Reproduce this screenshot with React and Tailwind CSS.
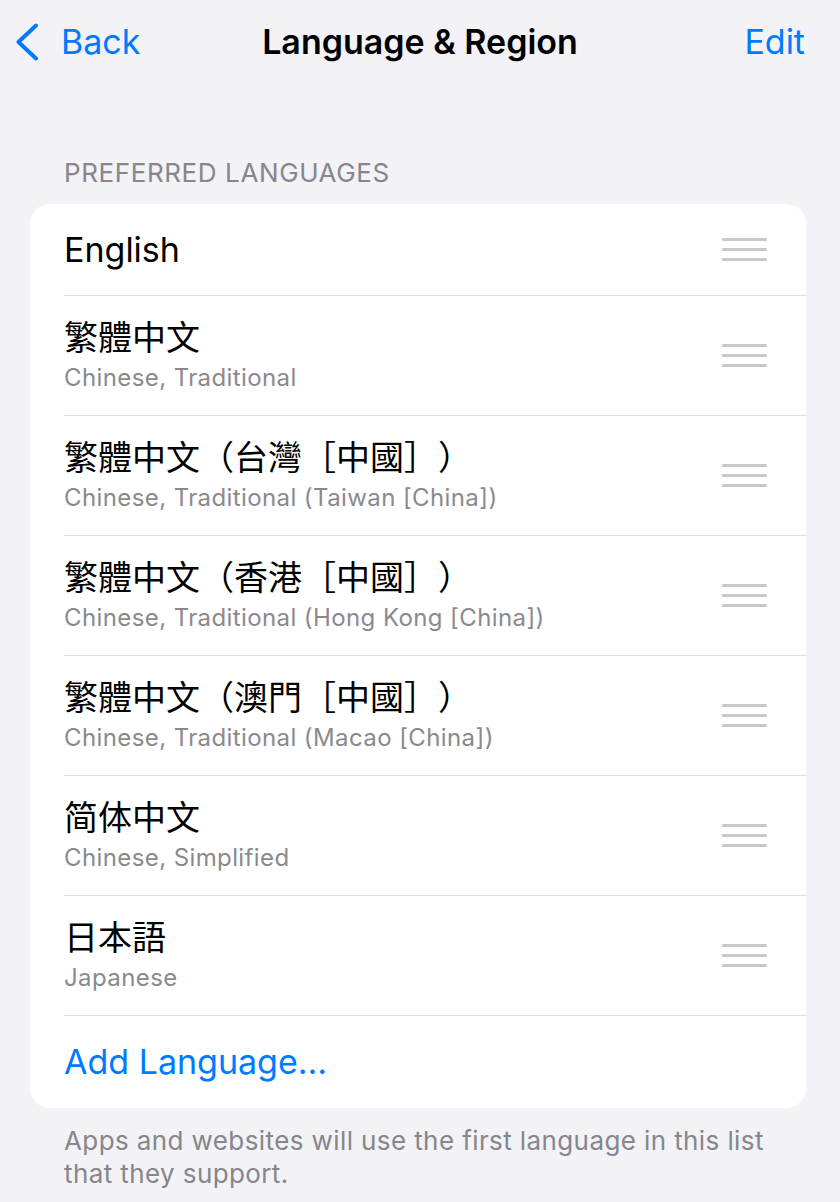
import React from "react";

const languages = [
  ["English", null, "en"],
  ["繁體中文", "Chinese, Traditional", "tc"],
  ["繁體中文（台灣［中國］）", "Chinese, Traditional (Taiwan [China])", "tc"],
  ["繁體中文（香港［中國］）", "Chinese, Traditional (Hong Kong [China])", "tc"],
  ["繁體中文（澳門［中國］）", "Chinese, Traditional (Macao [China])", "tc"],
  ["简体中文", "Chinese, Simplified", "sc"],
  ["日本語", "Japanese", "jp"],
];

const cjkFont = {
  en: "font-['Inter','Noto_Sans_CJK_TC',sans-serif]",
  tc: "font-['Inter','Noto_Sans_CJK_TC',sans-serif]",
  sc: "font-['Inter','Noto_Sans_CJK_SC',sans-serif]",
  jp: "font-['Inter','Noto_Sans_CJK_JP',sans-serif]",
};

function Handle() {
  return (
    <div className="flex w-[45px] flex-col gap-[7.5px]">
      <div className="h-[2.5px] rounded-full bg-[#c7c7cc]" />
      <div className="h-[2.5px] rounded-full bg-[#c7c7cc]" />
      <div className="h-[2.5px] rounded-full bg-[#c7c7cc]" />
    </div>
  );
}

function LanguageRow({ title, subtitle, script }) {
  return (
    <div className="pl-[34px]">
      <div
        className={`flex items-center justify-between border-b border-[#dedee2] pr-[39px] ${
          subtitle ? "h-[120px]" : "h-[92px]"
        }`}
      >
        <div className="flex flex-col">
          <span
            className={`text-[34px] leading-[40px] text-black [text-spacing-trim:space-all] ${cjkFont[script]}`}
          >
            {title}
          </span>
          {subtitle && (
            <span className="mt-[4px] text-[24px] leading-[32px] tracking-[0.4px] text-[#8a8a8e]">
              {subtitle}
            </span>
          )}
        </div>
        <Handle />
      </div>
    </div>
  );
}

export default function App() {
  return (
    <div className="min-h-[1202px] bg-[#f2f2f7] font-['Inter','Noto_Sans',sans-serif] antialiased">
      <header className="grid h-[84px] grid-cols-[1fr_auto_1fr] items-center">
        <button className="flex items-center gap-[22px] pl-[15px] text-[#007aff]">
          <svg width="24" height="38" viewBox="0 0 24 38" fill="none">
            <path
              d="M21 2.5 L3.5 19 L21 35.5"
              stroke="#007aff"
              strokeWidth="4"
              strokeLinecap="round"
              strokeLinejoin="round"
            />
          </svg>
          <span className="text-[34px] leading-[40px]">Back</span>
        </button>
        <h1 className="text-[34px] font-semibold leading-[40px] text-black">Language &amp; Region</h1>
        <div className="flex justify-end pr-[35px]">
          <button className="text-[34px] leading-[40px] text-[#007aff]">Edit</button>
        </div>
      </header>

      <div className="ml-[30px] mr-[34px]">
        <h2 className="pl-[34px] pt-[74px] text-[26px] leading-[30px] tracking-[0.6px] text-[#86868b]">
          PREFERRED LANGUAGES
        </h2>

        <div className="mt-[16px] overflow-hidden rounded-[20px] bg-white">
          {languages.map(([title, subtitle, script]) => (
            <LanguageRow key={title} title={title} subtitle={subtitle} script={script} />
          ))}
          <div className="flex h-[92px] items-center pl-[34px]">
            <span className="text-[34px] leading-[40px] text-[#007aff]">Add Language…</span>
          </div>
        </div>

        <p className="mt-[16px] pl-[34px] text-[26px] leading-[33px] tracking-[0.4px] text-[#86868b]">
          Apps and websites will use the first language in this list that they support.
        </p>
      </div>
    </div>
  );
}
